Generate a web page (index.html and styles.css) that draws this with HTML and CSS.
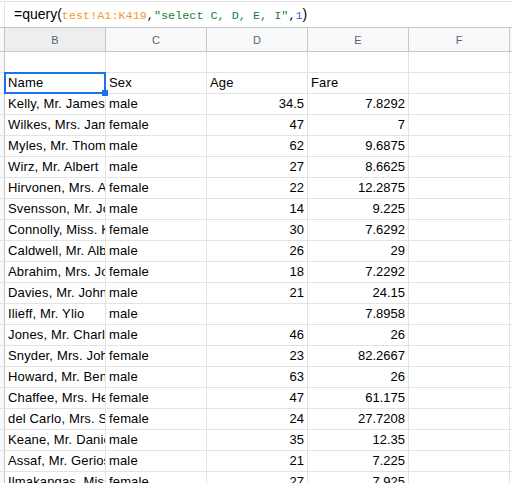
FILE: index.html
```html
<!DOCTYPE html>
<html>
<head>
<meta charset="utf-8">
<link rel="stylesheet" href="styles.css">
</head>
<body>
<div class="formula-bar">
  <div class="fx-gutter"></div>
  <div class="formula"><span class="fn">=query(</span><span class="mono rng">test!A1:K419</span><span class="mono">,</span><span class="mono str">"select C, D, E, I"</span><span class="mono">,</span><span class="mono num">1</span><span class="fn">)</span></div>
</div>
<div class="sheet">
  <div class="row head">
    <div class="stub"></div>
    <div class="cell sel-col">B</div><div class="cell">C</div><div class="cell">D</div><div class="cell">E</div><div class="cell">F</div><div class="cell rest"></div>
  </div>
  <div class="row"><div class="stub"></div><div class="cell"></div><div class="cell"></div><div class="cell"></div><div class="cell"></div><div class="cell"></div><div class="cell rest"></div></div>
  <div class="row"><div class="stub"></div><div class="cell selected">Name</div><div class="cell">Sex</div><div class="cell">Age</div><div class="cell">Fare</div><div class="cell"></div><div class="cell rest"></div></div>
  <div class="row"><div class="stub"></div><div class="cell">Kelly, Mr. James</div><div class="cell">male</div><div class="cell n">34.5</div><div class="cell n">7.8292</div><div class="cell"></div><div class="cell rest"></div></div>
  <div class="row"><div class="stub"></div><div class="cell">Wilkes, Mrs. James (Ellen Needs)</div><div class="cell">female</div><div class="cell n">47</div><div class="cell n">7</div><div class="cell"></div><div class="cell rest"></div></div>
  <div class="row"><div class="stub"></div><div class="cell">Myles, Mr. Thomas Francis</div><div class="cell">male</div><div class="cell n">62</div><div class="cell n">9.6875</div><div class="cell"></div><div class="cell rest"></div></div>
  <div class="row"><div class="stub"></div><div class="cell">Wirz, Mr. Albert</div><div class="cell">male</div><div class="cell n">27</div><div class="cell n">8.6625</div><div class="cell"></div><div class="cell rest"></div></div>
  <div class="row"><div class="stub"></div><div class="cell">Hirvonen, Mrs. Alexander (Helga E Lindqvist)</div><div class="cell">female</div><div class="cell n">22</div><div class="cell n">12.2875</div><div class="cell"></div><div class="cell rest"></div></div>
  <div class="row"><div class="stub"></div><div class="cell">Svensson, Mr. Johan Cervin</div><div class="cell">male</div><div class="cell n">14</div><div class="cell n">9.225</div><div class="cell"></div><div class="cell rest"></div></div>
  <div class="row"><div class="stub"></div><div class="cell">Connolly, Miss. Kate</div><div class="cell">female</div><div class="cell n">30</div><div class="cell n">7.6292</div><div class="cell"></div><div class="cell rest"></div></div>
  <div class="row"><div class="stub"></div><div class="cell">Caldwell, Mr. Albert Francis</div><div class="cell">male</div><div class="cell n">26</div><div class="cell n">29</div><div class="cell"></div><div class="cell rest"></div></div>
  <div class="row"><div class="stub"></div><div class="cell">Abrahim, Mrs. Joseph</div><div class="cell">female</div><div class="cell n">18</div><div class="cell n">7.2292</div><div class="cell"></div><div class="cell rest"></div></div>
  <div class="row"><div class="stub"></div><div class="cell">Davies, Mr. John Samuel</div><div class="cell">male</div><div class="cell n">21</div><div class="cell n">24.15</div><div class="cell"></div><div class="cell rest"></div></div>
  <div class="row"><div class="stub"></div><div class="cell">Ilieff, Mr. Ylio</div><div class="cell">male</div><div class="cell n"></div><div class="cell n">7.8958</div><div class="cell"></div><div class="cell rest"></div></div>
  <div class="row"><div class="stub"></div><div class="cell">Jones, Mr. Charles Cresson</div><div class="cell">male</div><div class="cell n">46</div><div class="cell n">26</div><div class="cell"></div><div class="cell rest"></div></div>
  <div class="row"><div class="stub"></div><div class="cell">Snyder, Mrs. John Pillsbury</div><div class="cell">female</div><div class="cell n">23</div><div class="cell n">82.2667</div><div class="cell"></div><div class="cell rest"></div></div>
  <div class="row"><div class="stub"></div><div class="cell">Howard, Mr. Benjamin</div><div class="cell">male</div><div class="cell n">63</div><div class="cell n">26</div><div class="cell"></div><div class="cell rest"></div></div>
  <div class="row"><div class="stub"></div><div class="cell">Chaffee, Mrs. Herbert Fuller</div><div class="cell">female</div><div class="cell n">47</div><div class="cell n">61.175</div><div class="cell"></div><div class="cell rest"></div></div>
  <div class="row"><div class="stub"></div><div class="cell">del Carlo, Mrs. Sebastiano</div><div class="cell">female</div><div class="cell n">24</div><div class="cell n">27.7208</div><div class="cell"></div><div class="cell rest"></div></div>
  <div class="row"><div class="stub"></div><div class="cell">Keane, Mr. Daniel</div><div class="cell">male</div><div class="cell n">35</div><div class="cell n">12.35</div><div class="cell"></div><div class="cell rest"></div></div>
  <div class="row"><div class="stub"></div><div class="cell">Assaf, Mr. Gerios</div><div class="cell">male</div><div class="cell n">21</div><div class="cell n">7.225</div><div class="cell"></div><div class="cell rest"></div></div>
  <div class="row"><div class="stub"></div><div class="cell">Ilmakangas, Miss. Pieta Sofia</div><div class="cell">female</div><div class="cell n">27</div><div class="cell n">7.925</div><div class="cell"></div><div class="cell rest"></div></div>
</div>
</body>
</html>
```
FILE: styles.css
```css
html, body {
  margin: 0;
  padding: 0;
  background: #ffffff;
}
body {
  width: 512px;
  height: 483px;
  overflow: hidden;
  font-family: "Liberation Sans", Arial, sans-serif;
  color: #000;
}
.formula-bar {
  display: flex;
  margin-top: 1px;
  height: 25px;
  border-top: 1px solid #e3e3e3;
}
.fx-gutter {
  width: 4px;
  flex: none;
  border-right: 1px solid #e3e3e3;
}
.formula {
  padding-left: 9px;
  line-height: 25px;
  font-size: 14px;
  white-space: nowrap;
  color: #000;
}
.mono {
  font-family: "Liberation Mono", "DejaVu Sans Mono", monospace;
  font-size: 11.8px;
}
.rng { color: #f4992b; }
.str { color: #188038; }
.num { color: #1a73e8; }

.sheet {
  border-top: 1px solid #c7c7c7;
}
.row {
  display: flex;
  height: 20px;
  border-bottom: 1px solid #e2e3e3;
}
.stub {
  width: 4px;
  flex: none;
  background: #f8f9fa;
  border-right: 1px solid #c7c7c7;
}
.cell {
  width: 94px;
  flex: none;
  padding: 0 3px;
  border-right: 1px solid #e2e3e3;
  font-size: 13px;
  letter-spacing: 0.15px;
  line-height: 20px;
  white-space: nowrap;
  overflow: hidden;
  position: relative;
}
.cell.rest {
  flex: 1;
  border-right: none;
}
.cell.n { text-align: right; letter-spacing: 0; }

.row.head {
  height: 23px;
  background: #f8f9fa;
  border-bottom: 1px solid #c7c7c7;
}
.row.head .cell {
  text-align: center;
  font-size: 11px;
  letter-spacing: 0;
  line-height: 24px;
  color: #5f6368;
  border-right-color: #c7c7c7;
}
.row.head .cell.sel-col {
  background: #eceef0;
}

.cell.selected {
  overflow: visible;
}
.cell.selected::after {
  content: "";
  position: absolute;
  left: -1px;
  top: -1px;
  right: -1px;
  bottom: -1px;
  border: 2px solid #1a73e8;
  pointer-events: none;
}
.cell.selected::before {
  content: "";
  position: absolute;
  left: 97px;
  top: 17px;
  width: 6px;
  height: 6px;
  background: #1a73e8;
  z-index: 2;
}
```
